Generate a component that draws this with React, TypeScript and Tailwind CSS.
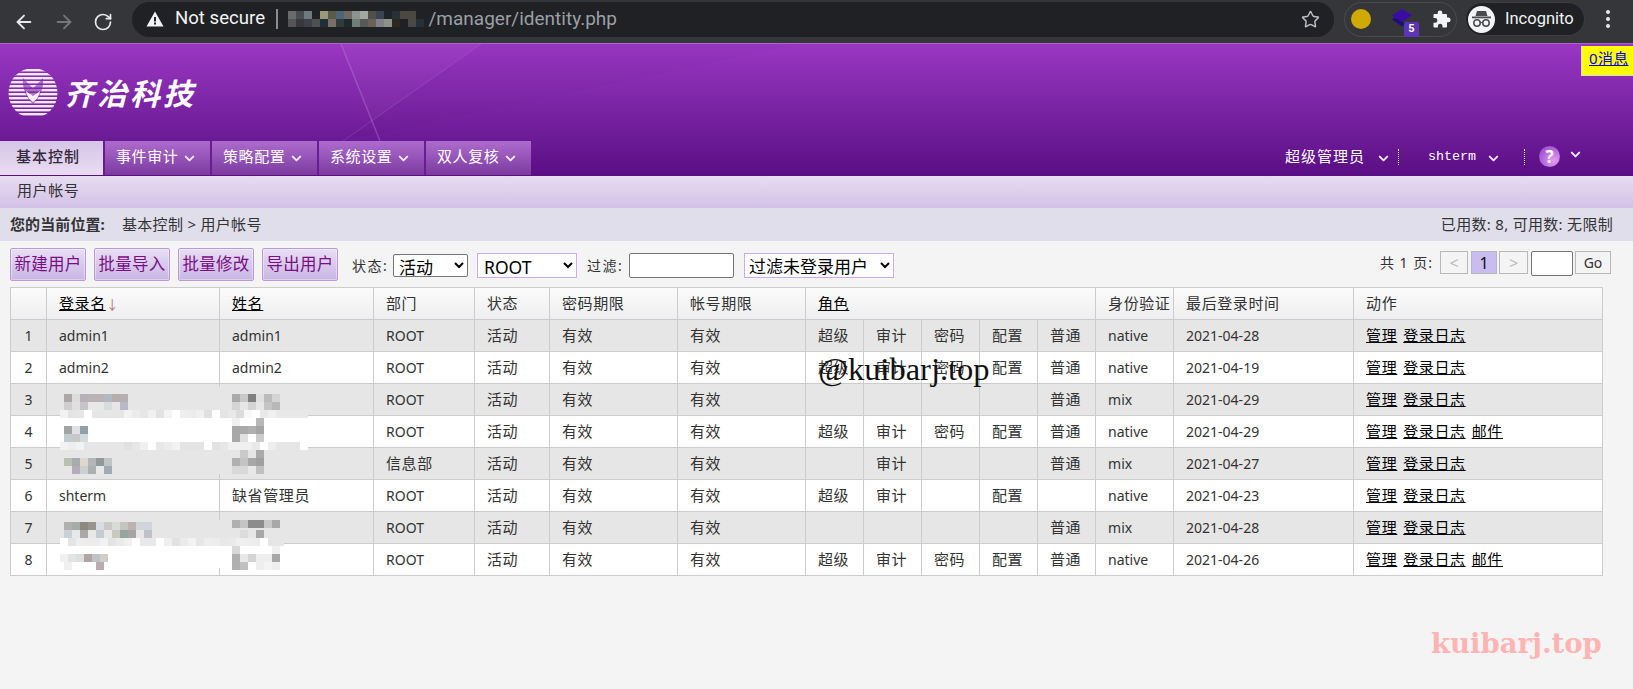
import React from "react";
import { ArrowLeft, ArrowRight, RotateCw, Star, ChevronDown } from "lucide-react";

const FONT = "[font-family:'Noto_Sans','Noto_Sans_CJK_SC',sans-serif]";

type M = [number, number, string[]];
const U = "";
const mosaic: M[] = [
  // row 3 text
  [394, 64, ["#aca8a8", "#dcdcdc", "#b8b0b8", "#bab2b6", "#bbb3b3", "#b4b8c0", "#b8aca8", "#b4b0b0"]],
  [402, 64, ["#cfcfcf", "#e0e0e0", "#c4c4cc", "#e8e8e8", "#e8e8e8", "#d8dcdc", "#e6e6e6", "#b8b8c8"]],
  // row 3 name
  [394, 232, ["#aaaaaa", "#c8c8c8", "#808080", "#e0e0e0", "#bbbbbb", "#d4d4d4"]],
  [402, 232, ["#d4d4d4", "#e6e6e6", "#d4d4d4", "#e6e6e6", "#c4c4c4", "#b8b8b8"]],
  // band 3/4
  [410, 60, ["#f2f2f2", "#e4e4e4", "#e6e6e6", "#ffffff", "#e6e6e6", "#e6e6e6", "#e6e6e6", "#e6e6e6", "#f2f2f2", "#ebebeb", "#e6e6e6", "#f0f0f0", "#e2e2e2", "#f4f4f4", "#ffffff", "#eeeeee", "#ececec", "#f0f0f0", "#e0e0e0", "#ffffff", "#e4e4e4", "#e8e8e8", "#dcdcdc", "#f8f8f8", "#ffffff", "#e8e8e8", "#f0f0f0", "#e8e8e8", "#e8e8e8", "#e8e8e8", "#e8e8e8"]],
  // row 4 text
  [426, 64, ["#a4a4a4", "#e0e0e8", "#90a0a8"]],
  [434, 64, ["#c0ccd0", "#c8c8c8", "#d0dcdc"]],
  // row 4 name
  [418, 232, ["#f0f0f0", "#ffffff", "#ffffff", "#b8b8b8"]],
  [426, 232, ["#a8a8a8", "#a8a8a8", "#b0b0b0", "#a4a4a4"]],
  [434, 232, ["#a8a8a8", "#e0e0e0", "#ffffff", "#cccccc"]],
  // band 4/5
  [442, 60, ["#f2f2f2", "#eeeeee", "#f2f2f2", "#e6e6e6", "#e6e6e6", "#e6e6e6", "#e6e6e6", "#e6e6e6", "#e0e0e0", "#e6e6e6", "#f0f0f0", "#ffffff", "#e8e8e8", "#ececec", "#f2f2f2", "#e4e4e4", "#e4e4e4", "#e4e4e4", "#ffffff", "#e2e2e2", "#e6e6e6", "#f0f0f0", "#f0f0f0", "#f0f0f0", "#e8e8e8", "#ffffff", "#eeeeee", "#e6e6e6", "#e6e6e6", "#e6e6e6", "#ffffff"]],
  // row 5
  [458, 64, ["#b8c0b0", "#a8acb0", "#e0d8cc", "#b0b8b8", "#949898", "#c0c4c4"]],
  [466, 64, ["#e6e6e6", "#b4acb8", "#c8d0d0", "#acb0b0", "#e8e8e8", "#a0acb4"]],
  [450, 232, ["#e6e6e6", "#cacaca", "#e6e6e6", "#aaaaaa"]],
  [458, 232, ["#b0b0b0", "#c4c4c4", "#a8a8a8", "#a0a0a0"]],
  [466, 232, ["#d8d8d8", "#d8d8d8", "#e8e8e8", "#c0c0c0"]],
  // row 7
  [522, 64, ["#b0b0b0", "#a8aca8", "#8c8880", "#989490", "#d8dce4", "#ccc8c4", "#d8dcd8", "#c4c4c0", "#bcb4ac", "#d0d4dc", "#d0d4dc"]],
  [530, 64, ["#ccd0d8", "#e8e8e8", "#aca8a8", "#e8e8e8", "#c4ccd0", "#e8e8e8", "#c8c8c0", "#98a4a0", "#a8a4a4", "#e8e8e8", "#c0c0c8"]],
  [520, 232, ["#b0b0b0", "#c4c4c4", "#8c8c8c", "#8c8c8c", "#c8c8c8", "#a8a8a8"]],
  [530, 232, ["#e6e6e6", "#dcdcdc", "#e6e6e6", "#a8a8a8", "#e6e6e6", "#e6e6e6"]],
  // band 7/8
  [538, 60, ["#ffffff", "#e4e4e4", "#eeeeee", "#ececec", "#ececec", "#f2f2f2", "#e4e4e4", "#eaeaea", "#f0f0f0", "#ffffff", "#e8e8e8", "#e8e8e8", "#ffffff", "#eeeeee", "#e2e2e2", "#ebebeb", "#f2f2f2", "#e6e6e6", "#eeeeee", "#ececec", "#e8e8e8", "#eaeaea", "#f0f0f0", "#eeeeee", "#ececec", "#ffffff", "#e6e6e6", "#e6e6e6"]],
  [546, 232, ["#d8d8d8", "#ffffff", "#ffffff", "#ffffff", "#ffffff", "#f0f0f0"]],
  // row 8
  [554, 60, ["#f0f0f0", "#e4e4e4", "#dce0dc", "#b0a4a4", "#bcc4c8", "#d0ccc8"]],
  [562, 64, ["#f0f0f0", "#ffffff", "#ffffff", "#ffffff", "#b8acb0"]],
  [554, 232, ["#b0b0b0", "#e8e8e8", "#d4d4d4", "#eeeeee", "#eeeeee", "#a8a8a8"]],
  [562, 232, ["#b0b0b0", "#c0c0c0", "#ffffff", "#eeeeee", "#f4f4f4", "#eeeeee"]],
];

const urlRows: M[] = [
  [11, 288, ["#6a6a6a", "#484c50", "#707880", "#202124", "#9a9a78", "#5a5a48", "#4c6478", "#6e6a62", "#8c9490", "#a0a8a0", "#505048", "#3c4454", "#202428", "#2a3038", "#4a4844", "#4a4640"]],
  [19, 288, ["#555555", "#38383c", "#40404a", "#505050", "#203038", "#787068", "#303a3c", "#20282c", "#707c78", "#585858", "#6a6058", "#808088", "#90908c", "#2c2820", "#202124", "#484848", "#283038"]],
];

function Mosaic({ rows, h = 8 }: { rows: M[]; h?: number }) {
  return (
    <>
      {rows.flatMap(([y, x, cs], r) =>
        cs.map((c, i) => <rect key={`${r}-${i}`} x={x + i * 8} y={y} width={8} height={h} fill={c} />)
      )}
    </>
  );
}

function Chev({ className = "" }: { className?: string }) {
  return <ChevronDown size={15} strokeWidth={3.2} className={`text-[#efe6f5] ${className}`} />;
}

function Logo() {
  const ys = [1, 5, 9, 13, 17, 21, 25, 29, 33, 37, 41, 45];
  return (
    <svg width="50" height="50" viewBox="0 0 50 50" className="shrink-0">
      <defs>
        <clipPath id="globe"><ellipse cx="25" cy="25" rx="24.5" ry="25" /></clipPath>
      </defs>
      <g clipPath="url(#globe)">
        {ys.map((y) => <rect key={y} x="0" y={y} width="50" height="2.4" fill="#f3e8f8" />)}
      </g>
      <path d="M15 10 C19 14 22 18 25 20 C28 18 31 14 35 10 C36 20 32 30 25 36 C18 30 14 20 15 10 Z" fill="#7d259f" opacity="0.6" />
      <path d="M18 23 C21 26 23 26 25 28 C27 26 29 26 32 23 C31 29 28 32 25 34 C22 32 19 29 18 23 Z" fill="#f8f0fb" />
    </svg>
  );
}

function Tab({ label, w }: { label: string; w: string }) {
  return (
    <div className={`${w} h-[34px] flex items-center pl-[11px] pb-[4px] border-l-2 border-[#6a1b96] bg-gradient-to-b from-[#ad6ccd] to-[#7c3a9f] text-white text-[15px] tracking-[0.6px]`}>
      <span>{label}</span>
      <Chev className="ml-[4px] mt-[4px]" />
    </div>
  );
}

const widths = [36, 173, 154, 101, 75, 128, 128, 58, 58, 58, 58, 58, 78, 180, 249];

type Row = { n: number; login: string; name: string; dept: string; roles: string[]; auth: string; date: string; mail?: boolean };
const rows: Row[] = [
  { n: 1, login: "admin1", name: "admin1", dept: "ROOT", roles: ["超级", "审计", "密码", "配置", "普通"], auth: "native", date: "2021-04-28" },
  { n: 2, login: "admin2", name: "admin2", dept: "ROOT", roles: ["超级", "审计", "密码", "配置", "普通"], auth: "native", date: "2021-04-19" },
  { n: 3, login: U, name: U, dept: "ROOT", roles: ["", "", "", "", "普通"], auth: "mix", date: "2021-04-29" },
  { n: 4, login: U, name: U, dept: "ROOT", roles: ["超级", "审计", "密码", "配置", "普通"], auth: "native", date: "2021-04-29", mail: true },
  { n: 5, login: U, name: U, dept: "信息部", roles: ["", "审计", "", "", "普通"], auth: "mix", date: "2021-04-27" },
  { n: 6, login: "shterm", name: "缺省管理员", dept: "ROOT", roles: ["超级", "审计", "", "配置", ""], auth: "native", date: "2021-04-23" },
  { n: 7, login: U, name: U, dept: "ROOT", roles: ["", "", "", "", "普通"], auth: "mix", date: "2021-04-28" },
  { n: 8, login: U, name: U, dept: "ROOT", roles: ["超级", "审计", "密码", "配置", "普通"], auth: "native", date: "2021-04-26", mail: true },
];

function Td({ children }: { children?: React.ReactNode }) {
  const zh = typeof children === "string" && /[\u4e00-\u9fa5]/.test(children);
  return (
    <td className={zh ? "border border-[#cccccc] pl-[12px] text-[15px] tracking-[0.6px] whitespace-nowrap" : "border border-[#cccccc] pl-[12px] text-[14px] whitespace-nowrap"}>
      {children}
    </td>
  );
}

function Th({ children, colSpan, link, after }: { children?: React.ReactNode; colSpan?: number; link?: boolean; after?: React.ReactNode }) {
  return (
    <th colSpan={colSpan} className="border border-[#cccccc] pl-[12px] text-left font-normal text-[15px] tracking-[0.6px] whitespace-nowrap overflow-hidden">
      {link ? <span className="underline text-black">{children}</span> : children}
      {after}
    </th>
  );
}

function Btn({ label }: { label: string }) {
  return (
    <button className="w-[76px] h-[33px] rounded-[2px] border border-[#b79ad8] bg-gradient-to-b from-[#e8def3] to-[#c9b6e4] text-[#7a0f85] text-[16.5px] tracking-[0.3px] whitespace-nowrap shadow-[inset_0_0_0_1px_rgba(255,255,255,0.35)]">
      {label}
    </button>
  );
}

function PageBtn({ children, w, active }: { children: React.ReactNode; w: string; active?: boolean }) {
  return (
    <div className={`${w} h-[23px] flex items-center justify-center border border-[#b8b8b8] text-[16px] ${active ? "bg-[#c8bcf0] text-[#111]" : "bg-[#f4f4f4] text-[#bbbbbb]"}`}>
      {children}
    </div>
  );
}

export default function App() {
  return (
    <div className={`relative w-[1633px] h-[689px] overflow-hidden bg-[#f4f4f4] text-[#333333] ${FONT}`}>
      {/* browser chrome */}
      <div className="h-[43px] bg-[#35363a] flex items-center">
        <div className="w-[132px] flex items-center pl-[13px] gap-[18px] shrink-0">
          <ArrowLeft size={22} strokeWidth={2} className="text-[#e8eaed]" />
          <ArrowRight size={22} strokeWidth={2} className="text-[#75777a]" />
          <RotateCw size={20} strokeWidth={2} className="text-[#e8eaed]" />
        </div>
        <div className="w-[1202px] h-[35px] mt-[-5px] rounded-full bg-[#202124] flex items-center pl-[14px] shrink-0">
          <svg width="18" height="16" viewBox="0 0 18 16" className="shrink-0"><path fillRule="evenodd" d="M9 0.5 L17.5 15.5 H0.5 Z M8 6 V10.5 H10 V6 Z M8 11.5 V13.5 H10 V11.5 Z" fill="#f1f3f4" /></svg>
          <span className="ml-[11px] text-[#f1f3f4] text-[18.6px] [font-family:'Roboto',sans-serif] w-[91px] whitespace-nowrap">Not secure</span>
          <span className="ml-[10px] w-[1.5px] h-[20px] bg-[#8a8c90]" />
          <span className="ml-[151px] text-[#9aa0a6] text-[19px] [font-family:'Roboto',sans-serif] whitespace-nowrap">/manager/identity.php</span>
          <Star size={19} strokeWidth={1.8} className="ml-auto mr-[14px] text-[#bdc1c6]" />
        </div>
        <div className="relative ml-[10px] mt-[-5px] w-[113px] h-[35px] rounded-full border border-[#4a4b4f] flex items-center shrink-0">
          <span className="ml-[6px] w-[20px] h-[20px] rounded-full bg-[#d0aa00]" />
          <svg width="20" height="18" viewBox="0 0 20 18" className="ml-[21px] mt-[-2px]">
            <path d="M3 8 L0 10.5 L10 17.5 L14 15 Z" fill="#1d0f78" />
            <path d="M10 0 L20 6.5 L10 13 L0 6.5 Z" fill="#3a0ca3" />
          </svg>
          <span className="absolute left-[59px] top-[19px] w-[15px] h-[15px] rounded-[2px] bg-[#5b35b5] text-white text-[11px] font-bold flex items-center justify-center [font-family:'Roboto',sans-serif]">5</span>
          <svg width="18" height="18" viewBox="0 0 18 18" className="ml-[21px]">
            <path d="M7 0.5 a2.3 2.3 0 0 1 2.3 2.3 V4 H13 a1 1 0 0 1 1 1 V7.5 H15.2 a2.4 2.4 0 0 1 0 4.8 H14 V16.5 a1 1 0 0 1 -1 1 H9.5 V16 a2.3 2.3 0 0 0 -4.6 0 V17.5 H1.5 a1 1 0 0 1 -1 -1 V12.8 H2 a2.4 2.4 0 0 0 0 -4.8 H0.5 V5 a1 1 0 0 1 1 -1 H4.7 V2.8 A2.3 2.3 0 0 1 7 0.5 Z" fill="#f1f3f4" />
          </svg>
        </div>
        <div className="ml-[8px] mt-[-5px] w-[120px] h-[34px] rounded-full bg-[#202124] border border-[#3c3d41] flex items-center shrink-0">
          <span className="ml-[2px] w-[27px] h-[27px] rounded-full bg-[#f1f3f4] flex items-center justify-center">
            <svg width="21" height="19" viewBox="0 0 21 19">
              <path d="M6 1 H15 L16.5 6 H4.5 Z" fill="#4a4b4f" />
              <rect x="1" y="6.5" width="19" height="1.8" fill="#4a4b4f" />
              <circle cx="6" cy="13" r="3.2" fill="none" stroke="#4a4b4f" strokeWidth="1.5" />
              <circle cx="15" cy="13" r="3.2" fill="none" stroke="#4a4b4f" strokeWidth="1.5" />
              <path d="M9 12.5 H12" stroke="#4a4b4f" strokeWidth="1.3" />
            </svg>
          </span>
          <span className="ml-[10px] text-[#f1f3f4] text-[16.5px] [font-family:'Roboto',sans-serif]">Incognito</span>
        </div>
        <div className="ml-[21px] mt-[-5px] flex flex-col gap-[3px]">
          <span className="w-[4px] h-[4px] rounded-full bg-[#e8eaed]" />
          <span className="w-[4px] h-[4px] rounded-full bg-[#e8eaed]" />
          <span className="w-[4px] h-[4px] rounded-full bg-[#e8eaed]" />
        </div>
      </div>

      {/* purple header */}
      <div className="relative h-[133px] bg-gradient-to-b from-[#9a37c2] to-[#5a0d85] border-t border-[#a668c4] flex flex-col">
        <svg className="absolute left-0 top-0 pointer-events-none" width="1633" height="97" viewBox="0 0 1633 97">
          <polygon points="341,0 481,0 372,77" fill="#ffffff" opacity="0.03" />
          <polygon points="481,0 800,0 343,97" fill="#000000" opacity="0.015" />
          <path d="M341 0 L380 97" stroke="#c08be0" strokeOpacity="0.35" strokeWidth="1.5" fill="none" />
          <path d="M481 0 L343 97" stroke="#c08be0" strokeOpacity="0.22" strokeWidth="1" fill="none" />
        </svg>
        <div className="relative h-[97px] flex items-center pl-[8px] pt-[1px]">
          <Logo />
          <span className="ml-[6px] text-white font-bold italic text-[30px] tracking-[3px] whitespace-nowrap">齐治科技</span>
        </div>
        <div className="relative h-[34px] flex items-stretch">
          <div className="w-[103px] h-[34px] flex items-center pl-[16px] pb-[4px] bg-gradient-to-b from-[#d6c5e7] to-[#e8dcf1] text-[#33283c] text-[15px] tracking-[1px] font-medium">基本控制</div>
          <Tab label="事件审计" w="w-[107px]" />
          <Tab label="策略配置" w="w-[107px]" />
          <Tab label="系统设置" w="w-[107px]" />
          <Tab label="双人复核" w="w-[107px]" />
          <div className="ml-auto pr-[50px] pb-[3px] flex items-center text-white">
            <span className="text-[15px] tracking-[1px] whitespace-nowrap">超级管理员</span>
            <Chev className="ml-[11px] mt-[4px]" />
            <span className="ml-[7px] h-[16px] border-l border-dotted border-white" />
            <span className="ml-[29px] [font-family:'Liberation_Mono',monospace] text-[13.33px]">shterm</span>
            <Chev className="ml-[10px] mt-[4px]" />
            <span className="ml-[23px] h-[16px] border-l border-dotted border-white" />
            <span className="ml-[14px] w-[21px] h-[21px] rounded-full bg-[radial-gradient(circle_at_70%_70%,#e59cf5,#8a3cc8)] flex items-center justify-center text-white text-[17px] font-bold">?</span>
            <Chev className="ml-[8px] mt-[-4px]" />
          </div>
        </div>
      </div>

      {/* sub nav */}
      <div className="h-[32px] bg-gradient-to-b from-[#e8dcf1] to-[#d3c1e7] flex items-center pl-[17px] pb-[4px] text-[15px] tracking-[0.6px] text-[#333]">用户帐号</div>

      {/* breadcrumb */}
      <div className="h-[33px] bg-[#e0deea] flex items-center justify-between pl-[10px] pr-[20px] text-[15px] tracking-[0.3px]">
        <div className="flex items-center">
          <span className="font-bold text-[#333] w-[112px] whitespace-nowrap tracking-[0.1px]">您的当前位置:</span>
          <span>基本控制 &gt; 用户帐号</span>
        </div>
        <span>已用数: 8, 可用数: 无限制</span>
      </div>

      {/* toolbar */}
      <div className="h-[46px] flex items-start pt-[7px] pl-[10px] pr-[22px]">
        <div className="flex gap-[8px]">
          <Btn label="新建用户" />
          <Btn label="批量导入" />
          <Btn label="批量修改" />
          <Btn label="导出用户" />
        </div>
        <div className="ml-[14px] mt-[5px] flex items-center text-[14px]">
          <span className="w-[41px] tracking-[1.5px] whitespace-nowrap">状态:</span>
          <select className="w-[75px] h-[23px] border border-[#767676] rounded-[2px] bg-white text-[17px] text-black pl-[1px] appearance-auto">
            <option>活动</option>
          </select>
          <select className="ml-[9px] w-[100px] h-[25px] border border-[#cfa9f5] bg-white text-[17.5px] text-black pl-[2px] appearance-auto">
            <option>ROOT</option>
          </select>
          <span className="ml-[10px] w-[42px] tracking-[1.5px] whitespace-nowrap">过滤:</span>
          <input className="w-[105px] h-[25px] border border-[#767676] rounded-[2px] bg-white" />
          <select className="ml-[10px] w-[150px] h-[25px] border border-[#cfa9f5] bg-white text-[17px] text-black appearance-auto">
            <option>过滤未登录用户</option>
          </select>
        </div>
        <div className="ml-auto mt-[3px] flex items-start text-[14px]">
          <span className="mr-[7px] tracking-[1px] leading-[23px] whitespace-nowrap">共 1 页:</span>
          <PageBtn w="w-[28px]">&lt;</PageBtn>
          <PageBtn w="w-[26px] ml-[3px]" active>1</PageBtn>
          <PageBtn w="w-[29px] ml-[2px]">&gt;</PageBtn>
          <input className="ml-[3px] w-[42px] h-[25px] border border-[#767676] rounded-[2px] bg-white" />
          <div className="ml-[2px] w-[36px] h-[23px] flex items-center justify-center border border-[#b8b8b8] text-[#333] text-[14px]">Go</div>
        </div>
      </div>

      {/* table */}
      <div className="pl-[10px]">
        <table className="table-fixed border-collapse w-[1592px]">
          <colgroup>
            {widths.map((w, i) => <col key={i} style={{ width: w }} />)}
          </colgroup>
          <thead>
            <tr className="h-[32px] bg-gradient-to-b from-[#fbfbfb] to-[#eeeef0]">
              <Th />
              <Th link after={<span className="text-[#b08068] text-[13px]">↓</span>}>登录名</Th>
              <Th link>姓名</Th>
              <Th>部门</Th>
              <Th>状态</Th>
              <Th>密码期限</Th>
              <Th>帐号期限</Th>
              <Th colSpan={5} link>角色</Th>
              <Th>身份验证</Th>
              <Th>最后登录时间</Th>
              <Th>动作</Th>
            </tr>
          </thead>
          <tbody>
            {rows.map((r) => (
              <tr key={r.n} className={r.n % 2 ? "h-[32px] bg-[#e6e6e6]" : "h-[32px] bg-white"}>
                <td className="border border-[#cccccc] text-center text-[14px]">{r.n}</td>
                <Td>{r.login}</Td>
                <Td>{r.name}</Td>
                <Td>{r.dept}</Td>
                <Td>活动</Td>
                <Td>有效</Td>
                <Td>有效</Td>
                {r.roles.map((x, i) => <Td key={i}>{x}</Td>)}
                <Td>{r.auth}</Td>
                <Td>{r.date}</Td>
                <td className="border border-[#cccccc] pl-[12px] text-[15px] tracking-[0.6px] whitespace-nowrap text-black">
                  <span className="underline">管理</span>
                  <span className="underline ml-[6px]">登录日志</span>
                  {r.mail && <span className="underline ml-[6px]">邮件</span>}
                </td>
              </tr>
            ))}
          </tbody>
        </table>
      </div>

      {/* pixelated redactions that lie over the table and the address bar */}
      <svg className="absolute left-0 top-0 pointer-events-none" width="1633" height="689" viewBox="0 0 1633 689">
        <rect x="216" y="387" width="8" height="27" fill="#e6e6e6" />
        <rect x="216" y="414" width="8" height="32" fill="#ffffff" />
        <rect x="216" y="446" width="8" height="28" fill="#e6e6e6" />
        <rect x="216" y="520" width="8" height="22" fill="#e6e6e6" />
        <rect x="216" y="542" width="8" height="26" fill="#ffffff" />
        <Mosaic rows={mosaic} />
        <Mosaic rows={urlRows} />
      </svg>

      {/* message badge */}
      <div className="absolute left-[1581px] top-[46px] w-[52px] h-[30px] bg-[#ffff00] border-l border-b border-[#d8d8d8] flex items-center pl-[7px] pb-[4px] text-[15px] text-[#0000ee] underline tracking-[0.3px] whitespace-nowrap">0消息</div>

      {/* watermarks */}
      <div className="absolute left-[818px] top-[349px] text-[#111] text-[32.5px] leading-[40px] [font-family:'Liberation_Serif',serif] whitespace-nowrap"><span className="italic">@</span>kuibarj.top</div>
      <div className="absolute left-[1431px] top-[627px] text-[#ffb4b4] text-[27.5px] leading-[32px] font-bold [font-family:'DejaVu_Serif',serif] whitespace-nowrap">kuibarj.top</div>
    </div>
  );
}
